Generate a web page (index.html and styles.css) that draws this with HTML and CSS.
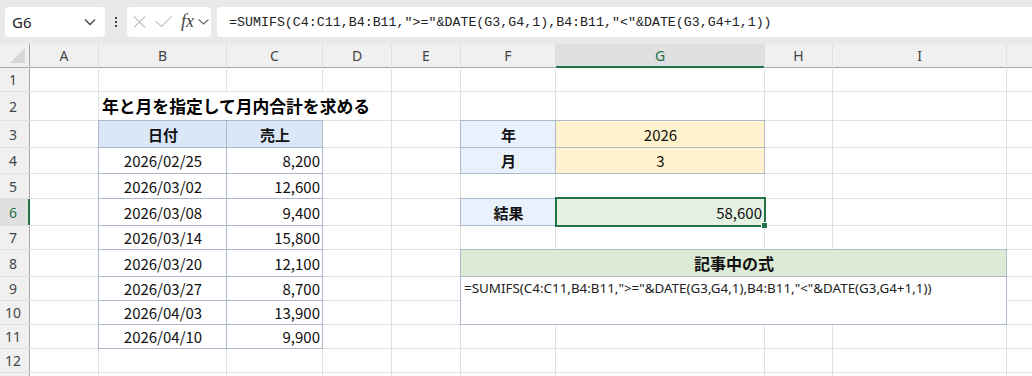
FILE: index.html
```html
<!DOCTYPE html>
<html lang="ja">
<head>
  <meta charset="UTF-8">
  <title>SUMIFS 月内合計</title>
  <link rel="stylesheet" href="styles.css">
</head>
<body>
  <div class="toolbar">
    <div class="namebox">
      <span>G6</span>
      <svg class="chev" width="12" height="8" viewBox="0 0 12 8"><path d="M1 1.5 L6 6.5 L11 1.5" fill="none" stroke="#444" stroke-width="1.3"/></svg>
    </div>
    <div class="dots"><i></i><i></i><i></i></div>
    <div class="fxbox">
      <svg width="13" height="12" viewBox="0 0 13 12"><path d="M1 0.5 L12 11.5 M12 0.5 L1 11.5" stroke="#c4c4c4" stroke-width="1.2" fill="none"/></svg>
      <svg width="17" height="12" viewBox="0 0 17 12"><path d="M0.5 5 L6.5 10.5 L16.5 0.5" stroke="#c4c4c4" stroke-width="1.2" fill="none"/></svg>
      <span class="fx">fx</span>
      <svg width="11" height="6" viewBox="0 0 11 6"><path d="M0.5 0.5 L5.5 5 L10.5 0.5" stroke="#666" stroke-width="1.1" fill="none"/></svg>
    </div>
    <div class="formula">=SUMIFS(C4:C11,B4:B11,"&gt;="&amp;DATE(G3,G4,1),B4:B11,"&lt;"&amp;DATE(G3,G4+1,1))</div>
  </div>

  <div class="sheet">
    <!-- column headers -->
    <div class="ch corner"><span class="tri"></span></div>
    <div class="ch">A</div><div class="ch">B</div><div class="ch">C</div><div class="ch">D</div>
    <div class="ch">E</div><div class="ch">F</div><div class="ch sel">G</div><div class="ch">H</div>
    <div class="ch">I</div><div class="ch"></div>

    <!-- 1 -->
    <div class="rh">1</div>
    <div class="c"></div><div class="c"></div><div class="c"></div><div class="c"></div><div class="c"></div>
    <div class="c"></div><div class="c"></div><div class="c"></div><div class="c"></div><div class="c"></div>

    <!-- 2 -->
    <div class="rh">2</div>
    <div class="c"></div>
    <div class="c title">年と月を指定して月内合計を求める</div>
    <div class="c"></div><div class="c"></div><div class="c"></div><div class="c"></div><div class="c"></div><div class="c"></div>

    <!-- 3 -->
    <div class="rh">3</div>
    <div class="c"></div>
    <div class="c bd head">日付</div>
    <div class="c bd head">売上</div>
    <div class="c"></div><div class="c"></div>
    <div class="c bd label">年</div>
    <div class="c bd input">2026</div>
    <div class="c"></div><div class="c"></div><div class="c"></div>

    <!-- 4 -->
    <div class="rh">4</div>
    <div class="c"></div>
    <div class="c bd mid">2026/02/25</div>
    <div class="c bd num">8,200</div>
    <div class="c"></div><div class="c"></div>
    <div class="c bd label">月</div>
    <div class="c bd input">3</div>
    <div class="c"></div><div class="c"></div><div class="c"></div>

    <!-- 5 -->
    <div class="rh">5</div>
    <div class="c"></div>
    <div class="c bd mid">2026/03/02</div>
    <div class="c bd num">12,600</div>
    <div class="c"></div><div class="c"></div><div class="c"></div><div class="c"></div>
    <div class="c"></div><div class="c"></div><div class="c"></div>

    <!-- 6 -->
    <div class="rh sel">6</div>
    <div class="c"></div>
    <div class="c bd mid">2026/03/08</div>
    <div class="c bd num">9,400</div>
    <div class="c"></div><div class="c"></div>
    <div class="c bd label">結果</div>
    <div class="c bd num result active">58,600</div>
    <div class="c"></div><div class="c"></div><div class="c"></div>

    <!-- 7 -->
    <div class="rh">7</div>
    <div class="c"></div>
    <div class="c bd mid">2026/03/14</div>
    <div class="c bd num">15,800</div>
    <div class="c"></div><div class="c"></div><div class="c"></div><div class="c"></div>
    <div class="c"></div><div class="c"></div><div class="c"></div>

    <!-- 8 -->
    <div class="rh">8</div>
    <div class="c"></div>
    <div class="c bd mid">2026/03/20</div>
    <div class="c bd num">12,100</div>
    <div class="c"></div><div class="c"></div>
    <div class="c bd memo-head">記事中の式</div>
    <div class="c"></div>

    <!-- 9 -->
    <div class="rh">9</div>
    <div class="c"></div>
    <div class="c bd mid">2026/03/27</div>
    <div class="c bd num">8,700</div>
    <div class="c"></div><div class="c"></div>
    <div class="c bd memo">=SUMIFS(C4:C11,B4:B11,"&gt;="&amp;DATE(G3,G4,1),B4:B11,"&lt;"&amp;DATE(G3,G4+1,1))</div>
    <div class="c"></div>

    <!-- 10 -->
    <div class="rh">10</div>
    <div class="c"></div>
    <div class="c bd mid">2026/04/03</div>
    <div class="c bd num">13,900</div>
    <div class="c"></div><div class="c"></div>
    <div class="c"></div>

    <!-- 11 -->
    <div class="rh">11</div>
    <div class="c"></div>
    <div class="c bd mid">2026/04/10</div>
    <div class="c bd num">9,900</div>
    <div class="c"></div><div class="c"></div><div class="c"></div><div class="c"></div>
    <div class="c"></div><div class="c"></div><div class="c"></div>

    <!-- 12 -->
    <div class="rh">12</div>
    <div class="c"></div><div class="c"></div><div class="c"></div><div class="c"></div><div class="c"></div>
    <div class="c"></div><div class="c"></div><div class="c"></div><div class="c"></div><div class="c"></div>

    <!-- 13: only its top edge is in view -->
    <div class="rh"></div>
    <div class="c"></div><div class="c"></div><div class="c"></div><div class="c"></div><div class="c"></div>
    <div class="c"></div><div class="c"></div><div class="c"></div><div class="c"></div><div class="c"></div>
  </div>
</body>
</html>
```

FILE: styles.css
```css
body {
  margin: 0;
  background: #fff;
  overflow: hidden;
  font-family: "Noto Sans", sans-serif;
}

/* formula bar */
.toolbar {
  height: 44px;
  box-sizing: border-box;
  padding: 7px 0 7px 5px;
  background: #e9e9e9;
  display: flex;
  align-items: stretch;
}

.namebox {
  width: 100px;
  box-sizing: border-box;
  background: #fff;
  border-radius: 4px;
  display: flex;
  align-items: center;
  justify-content: space-between;
  padding: 0 9px 0 7px;
  font-size: 15px;
  color: #222;
}

.dots {
  width: 22px;
  display: flex;
  flex-direction: column;
  align-items: center;
  justify-content: center;
  gap: 2px;
}

.dots i {
  width: 2px;
  height: 2px;
  background: #444;
}

.fxbox {
  width: 84px;
  box-sizing: border-box;
  background: #fff;
  border-radius: 4px;
  display: flex;
  align-items: center;
  padding: 0 0 0 6px;
}

.fxbox svg:nth-child(2) {
  margin-left: 9px;
}

.fx {
  margin-left: 9px;
  margin-right: 4px;
  font-family: "Liberation Serif", serif;
  font-style: italic;
  font-size: 18px;
  color: #444;
  line-height: 1;
  margin-top: -3px;
}

.formula {
  flex: 1;
  margin-left: 6px;
  background: #fff;
  border-radius: 4px 0 0 4px;
  padding: 0 0 0 12px;
  display: flex;
  align-items: center;
  font-family: "Liberation Mono", monospace;
  font-size: 13.3px;
  color: #222;
  white-space: pre;
}

/* grid */
.sheet {
  display: grid;
  grid-template-columns: 29px 68px 127px 95px 68px 68px 94px 208px 67px 173px 1fr;
  grid-template-rows: 23px 23px 28px 26px 25px 24px 26px 23px 26px 23px 23px 23px 23px 23px;
  gap: 1px;
  background: #e1e1e1;
}

.ch, .rh {
  background: #f0f0f0;
  color: #444;
  font-size: 14px;
  display: flex;
  align-items: center;
  justify-content: center;
}

.ch {
  box-shadow: 0 1px 0 #a6a6a6;
}

.rh {
  box-shadow: 1px 0 0 #a6a6a6;
  padding-right: 3px;
}

.corner {
  box-shadow: 0 1px 0 #a6a6a6, 1px 0 0 #a6a6a6;
  position: relative;
}

.tri {
  position: absolute;
  right: 4px;
  bottom: 4px;
  width: 0;
  height: 0;
  border-left: 15px solid transparent;
  border-bottom: 15px solid #d6d6d6;
}

.ch.sel {
  background: #e0e0e0;
  color: #1e7145;
  box-shadow: inset 0 -1px 0 #217346, 0 1px 0 #217346;
}

.rh.sel {
  background: #e0e0e0;
  color: #1e7145;
  box-shadow: inset -1px 0 0 #217346, 1px 0 0 #217346;
}

.c {
  background: #fff;
  display: flex;
  align-items: center;
  padding: 0 2px 0 3px;
  min-width: 0;
  white-space: nowrap;
  font-family: "Noto Sans CJK JP", sans-serif;
  font-size: 15px;
  color: #111;
}

.bd {
  box-shadow: 0 0 0 1px #acb9ca;
}

.title {
  grid-column: span 3;
  font-weight: bold;
  font-size: 16.8px;
  color: #000;
}

.head {
  background: #dae7f7;
  justify-content: center;
  font-weight: bold;
}

.mid {
  justify-content: center;
}

.num {
  justify-content: flex-end;
}

.label {
  background: #e9f1fc;
  justify-content: center;
  font-weight: bold;
}

.input {
  background: #fff2cc;
  justify-content: center;
}

.result {
  background: #e5f2e3;
}

.active {
  position: relative;
}

.active::after {
  content: "";
  position: absolute;
  top: -2px;
  left: -1px;
  right: -2px;
  bottom: -2px;
  border: 2px solid #217346;
}

.active::before {
  content: "";
  position: absolute;
  right: -4px;
  bottom: -4px;
  width: 5px;
  height: 5px;
  background: #217346;
  border: 1px solid #fff;
  z-index: 1;
}

.memo-head {
  grid-column: span 4;
  background: #ddebd6;
  justify-content: center;
  font-weight: bold;
  font-size: 16px;
}

.memo {
  grid-column: span 4;
  grid-row: span 2;
  align-items: flex-start;
  padding-top: 2px;
  font-family: "Noto Sans", sans-serif;
  font-size: 13.4px;
  color: #222;
}
```
